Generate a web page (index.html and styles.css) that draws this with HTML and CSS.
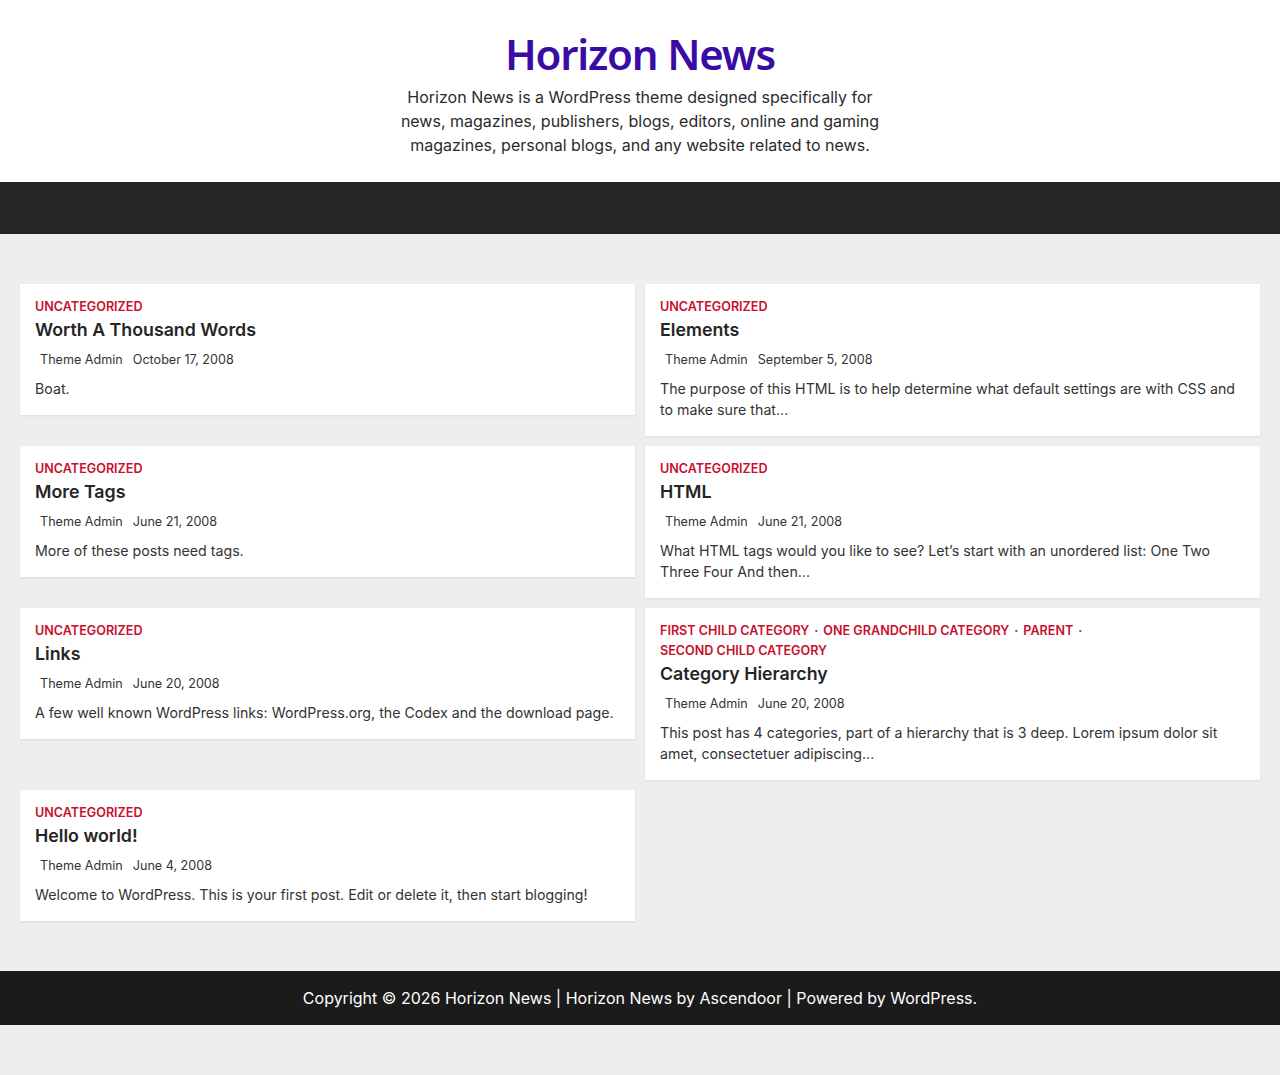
FILE: index.html
```html
<!DOCTYPE html>
<html lang="en">

<head>
  <meta charset="UTF-8" />
  <meta name="viewport" content="width=device-width, initial-scale=1.0" />
  <title>Horizon News</title>
  <link rel="stylesheet" href="styles.css">
</head>

<body>
  <header class="site-header">
    <h1 class="site-title">Horizon News</h1>
    <p class="site-description">Horizon News is a WordPress theme designed specifically for news, magazines, publishers, blogs, editors, online and gaming magazines, personal blogs, and any website related to news.</p>
  </header>

  <nav class="main-nav"></nav>

  <main class="site-main">
    <div class="post-grid">
      <article class="post-card">
        <div class="post-cats"><span>Uncategorized</span></div>
        <h2 class="post-title">Worth A Thousand Words</h2>
        <div class="post-meta"><span>Theme Admin</span><span>October 17, 2008</span></div>
        <p class="post-excerpt">Boat.</p>
      </article>
      <article class="post-card">
        <div class="post-cats"><span>Uncategorized</span></div>
        <h2 class="post-title">Elements</h2>
        <div class="post-meta"><span>Theme Admin</span><span>September 5, 2008</span></div>
        <p class="post-excerpt">The purpose of this HTML is to help determine what default settings are with CSS and to make sure that...</p>
      </article>
      <article class="post-card">
        <div class="post-cats"><span>Uncategorized</span></div>
        <h2 class="post-title">More Tags</h2>
        <div class="post-meta"><span>Theme Admin</span><span>June 21, 2008</span></div>
        <p class="post-excerpt">More of these posts need tags.</p>
      </article>
      <article class="post-card">
        <div class="post-cats"><span>Uncategorized</span></div>
        <h2 class="post-title">HTML</h2>
        <div class="post-meta"><span>Theme Admin</span><span>June 21, 2008</span></div>
        <p class="post-excerpt">What HTML tags would you like to see? Let’s start with an unordered list: One Two Three Four And then...</p>
      </article>
      <article class="post-card">
        <div class="post-cats"><span>Uncategorized</span></div>
        <h2 class="post-title">Links</h2>
        <div class="post-meta"><span>Theme Admin</span><span>June 20, 2008</span></div>
        <p class="post-excerpt">A few well known WordPress links: WordPress.org, the Codex and the download page.</p>
      </article>
      <article class="post-card">
        <div class="post-cats">
          <span>First Child Category</span>
          <span>One Grandchild Category</span>
          <span>Parent</span>
          <span>Second Child Category</span>
        </div>
        <h2 class="post-title">Category Hierarchy</h2>
        <div class="post-meta"><span>Theme Admin</span><span>June 20, 2008</span></div>
        <p class="post-excerpt">This post has 4 categories, part of a hierarchy that is 3 deep. Lorem ipsum dolor sit amet, consectetuer adipiscing...</p>
      </article>
      <article class="post-card">
        <div class="post-cats"><span>Uncategorized</span></div>
        <h2 class="post-title">Hello world!</h2>
        <div class="post-meta"><span>Theme Admin</span><span>June 4, 2008</span></div>
        <p class="post-excerpt">Welcome to WordPress. This is your first post. Edit or delete it, then start blogging!</p>
      </article>
    </div>
  </main>

  <footer class="site-footer">
    <p>Copyright © 2026 Horizon News | Horizon News by Ascendoor | Powered by WordPress.</p>
  </footer>
</body>

</html>
```

FILE: styles.css
```css
* {
  box-sizing: border-box;
}

body {
  margin: 0;
  background: #eeeeee;
  color: #252525;
  font-family: Inter, "Liberation Sans", sans-serif;
}

/* header */
.site-header {
  background: #fff;
  padding: 28px 20px 25px;
  text-align: center;
}

.site-title {
  margin: 0;
  font-family: "Noto Sans", sans-serif;
  font-size: 42px;
  font-weight: 600;
  line-height: 1.25;
  letter-spacing: -1.2px;
  color: #3a0ca3;
}

.site-description {
  max-width: 490px;
  margin: 4px auto 0;
  font-size: 16px;
  line-height: 24px;
  color: #2b2b2b;
}

.main-nav {
  height: 52px;
  background: #252525;
}

/* posts */
.site-main {
  padding: 50px 20px;
}

.post-grid {
  display: grid;
  grid-template-columns: 1fr 1fr;
  gap: 10px;
  align-items: start;
}

.post-card {
  background: #fff;
  padding: 13px 15px 16px;
  box-shadow: 0 1px 2px rgba(0, 0, 0, 0.08);
}

.post-cats {
  display: flex;
  flex-wrap: wrap;
  font-size: 12.6px;
  font-weight: 600;
  line-height: 20px;
  text-transform: uppercase;
  color: #c8102e;
}

.post-cats span:not(:last-child)::after {
  content: "·";
  margin: 0 5px;
  color: #555;
}

.post-title {
  margin: 1px 0 8px;
  font-size: 17.8px;
  font-weight: 600;
  line-height: 24px;
}

.post-meta {
  display: flex;
  gap: 10px;
  padding-left: 5px;
  font-size: 12.6px;
  line-height: 20px;
  color: #333;
}

.post-excerpt {
  margin: 8px 0 0;
  font-size: 14.2px;
  line-height: 21px;
  color: #333;
}

/* footer */
.site-footer {
  background: #1b1b1b;
  color: #fff;
  text-align: center;
  padding: 15px 20px;
}

.site-footer p {
  margin: 0;
  font-size: 16px;
  line-height: 24px;
}
```
